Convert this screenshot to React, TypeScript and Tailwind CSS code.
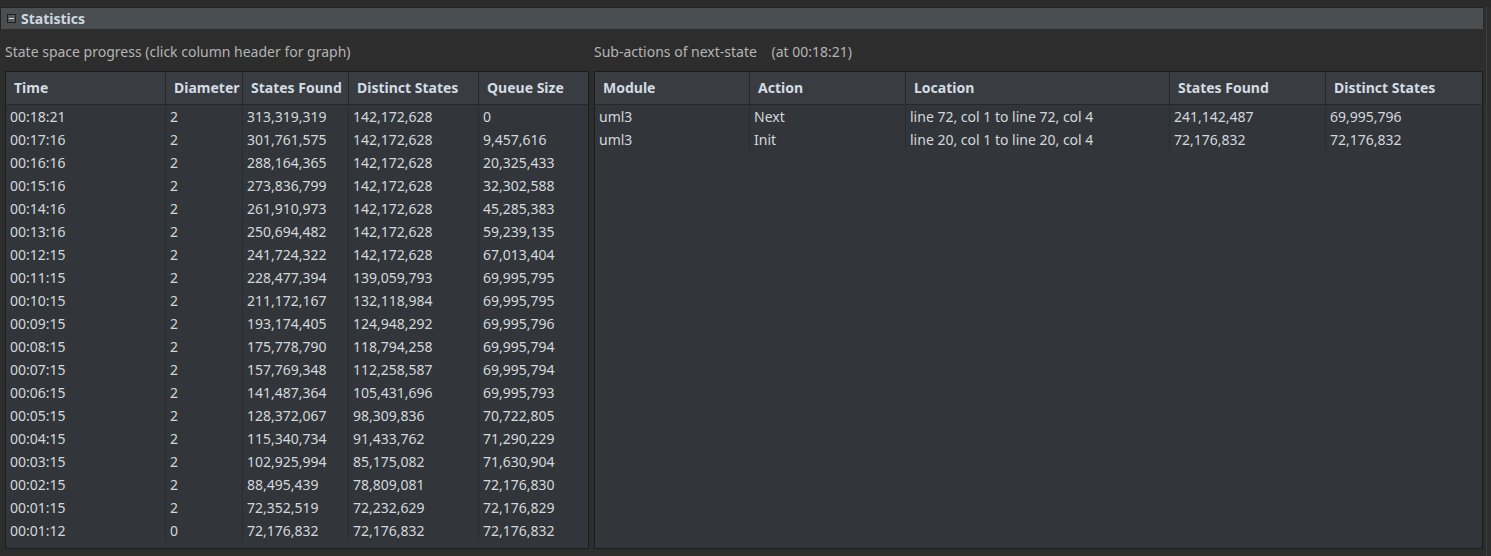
const progress: string[][] = [
  ["00:18:21", "2", "313,319,319", "142,172,628", "0"],
  ["00:17:16", "2", "301,761,575", "142,172,628", "9,457,616"],
  ["00:16:16", "2", "288,164,365", "142,172,628", "20,325,433"],
  ["00:15:16", "2", "273,836,799", "142,172,628", "32,302,588"],
  ["00:14:16", "2", "261,910,973", "142,172,628", "45,285,383"],
  ["00:13:16", "2", "250,694,482", "142,172,628", "59,239,135"],
  ["00:12:15", "2", "241,724,322", "142,172,628", "67,013,404"],
  ["00:11:15", "2", "228,477,394", "139,059,793", "69,995,795"],
  ["00:10:15", "2", "211,172,167", "132,118,984", "69,995,795"],
  ["00:09:15", "2", "193,174,405", "124,948,292", "69,995,796"],
  ["00:08:15", "2", "175,778,790", "118,794,258", "69,995,794"],
  ["00:07:15", "2", "157,769,348", "112,258,587", "69,995,794"],
  ["00:06:15", "2", "141,487,364", "105,431,696", "69,995,793"],
  ["00:05:15", "2", "128,372,067", "98,309,836", "70,722,805"],
  ["00:04:15", "2", "115,340,734", "91,433,762", "71,290,229"],
  ["00:03:15", "2", "102,925,994", "85,175,082", "71,630,904"],
  ["00:02:15", "2", "88,495,439", "78,809,081", "72,176,830"],
  ["00:01:15", "2", "72,352,519", "72,232,629", "72,176,829"],
  ["00:01:12", "0", "72,176,832", "72,176,832", "72,176,832"],
];

const subActions: string[][] = [
  ["uml3", "Next", "line 72, col 1 to line 72, col 4", "241,142,487", "69,995,796"],
  ["uml3", "Init", "line 20, col 1 to line 20, col 4", "72,176,832", "72,176,832"],
];

interface TableProps {
  headers: string[]
  cols: string
  rows: string[][]
  width: string
}

const Table: React.FC<TableProps> = ({ headers, cols, rows, width }) => {
  return (
    <div className={`${width} h-[478px] border border-[#1b1c1d] bg-[#32363a] overflow-hidden`}>
      <div className={`grid ${cols} h-[33px] bg-[#393d41] border-b border-[#26292b]`}>
        {headers.map((h, i) => (
          <div
            key={h}
            className={`pl-2 pb-px flex items-center font-bold text-[14px] text-[#d3dbe3] whitespace-nowrap overflow-hidden ${i > 0 ? "border-l border-[#26292b]" : ""}`}
          >
            {h}
          </div>
        ))}
      </div>
      {rows.map((r, ri) => (
        <div key={ri} className={`grid ${cols} h-[23px]`}>
          {r.map((c, ci) => (
            <div
              key={ci}
              className={`pl-1 flex items-center text-[14px] text-[#d4d8dc] whitespace-nowrap ${ci > 0 ? "border-l border-[#2a2d30]" : ""}`}
            >
              {c}
            </div>
          ))}
        </div>
      ))}
    </div>
  );
};

export default function App() {
  return (
    <div
      className="w-[1491px] h-[556px] bg-[#2d2d2d] overflow-hidden relative"
      style={{ fontFamily: '"Noto Sans", "Open Sans", sans-serif' }}
    >
      <div className="h-[7px] bg-[#2b2b2b]"></div>
      <div className="flex h-[549px]">
        <div className="w-[1484px] flex flex-col">
          <div className="h-[22px] bg-[#4a4e51] border-t border-l border-[#222324] flex items-center pl-[6px] gap-[5px]">
            <div className="w-[9px] h-[9px] border border-[#1e1f20] bg-[#55595c] flex items-center justify-center">
              <div className="w-[5px] h-px bg-[#d8dde2]"></div>
            </div>
            <span className="font-bold text-[14px] text-[#cfd8e0]">Statistics</span>
          </div>
          <div className="flex gap-[5px] pl-[5px] pt-[12px]">
            <div className="flex flex-col">
              <div className="h-[20px] flex items-center text-[14px] text-[#b4b4b4] whitespace-nowrap">
                State space progress (click column header for graph)
              </div>
              <div className="h-[10px]"></div>
              <Table
                width="w-[584px]"
                cols="grid-cols-[159px_77px_106px_130px_110px]"
                headers={["Time", "Diameter", "States Found", "Distinct States", "Queue Size"]}
                rows={progress}
              />
            </div>
            <div className="flex flex-col">
              <div className="h-[20px] flex items-center text-[14px] text-[#b4b4b4] whitespace-pre">
                {"Sub-actions of next-state    (at 00:18:21)"}
              </div>
              <div className="h-[10px]"></div>
              <Table
                width="w-[889px]"
                cols="grid-cols-[154px_156px_264px_156px_157px]"
                headers={["Module", "Action", "Location", "States Found", "Distinct States"]}
                rows={subActions}
              />
            </div>
          </div>
        </div>
        <div className="w-[7px] border-l border-[#3d3f41] ml-[3px]"></div>
      </div>
    </div>
  );
}
